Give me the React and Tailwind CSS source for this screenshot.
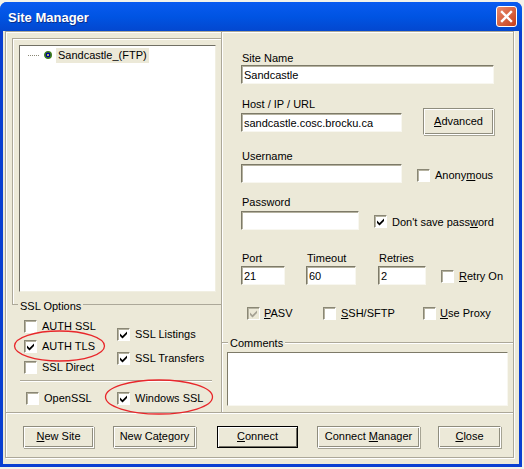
const checkPath = "M1 3.5 L3.5 6 L8 1.5 L8 4 L3.5 8.5 L1 6 Z";

function Check({ checked, disabled }) {
  return (
    <span className={`flex w-[13px] h-[13px] shrink-0 items-center justify-center border-t border-l border-t-[#8a8775] border-l-[#8a8775] border-r border-b border-r-white border-b-white shadow-[inset_1px_1px_0_#b5b2a0] ${disabled ? "bg-[#ece9d8]" : "bg-white"}`}>
      {checked && (
        <svg width="9" height="9" viewBox="0 0 9 9">
          <path d={checkPath} fill={disabled ? "#a5a294" : "#000"} />
        </svg>
      )}
    </span>
  );
}

function CheckRow({ className = "", checked, disabled, gap = "gap-[5px]", children }) {
  return (
    <div className={`flex items-center h-[14px] ${gap} ${className}`}>
      <Check checked={checked} disabled={disabled} />
      <span className="whitespace-nowrap leading-[14px]">{children}</span>
    </div>
  );
}

function Field({ className = "", value = "" }) {
  return (
    <div className={`h-[19px] bg-white border border-t-[#7d7a68] border-l-[#7d7a68] border-r-[#f8f7f0] border-b-[#f8f7f0] shadow-[inset_1px_1px_0_#b5b2a0] pl-[2px] leading-[18px] whitespace-nowrap overflow-hidden ${className}`}>
      {value}
    </div>
  );
}

function Label({ className = "", children }) {
  return <div className={`h-[14px] leading-[14px] pl-[1px] ${className}`}>{children}</div>;
}

function Btn({ className = "", def, children }) {
  return (
    <button className={`flex items-center justify-center pb-[1px] bg-[#ece9d8] whitespace-nowrap ${def ? "border border-black shadow-[inset_1px_1px_0_#fff,inset_-1px_-1px_0_#716f64]" : "border border-t-[#8f8d7e] border-l-[#8f8d7e] border-r-white border-b-white shadow-[1px_1px_0_#a6a494,inset_1px_1px_0_#fff,inset_-1px_-1px_0_#8f8d7e]"} ${className}`}>
      {children}
    </button>
  );
}

function Groove({ className = "" }) {
  return <div className={`h-[2px] border-t border-t-[#aca899] border-b border-b-white ${className}`} />;
}

export default function App() {
  return (
    <div className="relative w-[524px] h-[469px] overflow-hidden bg-[#f3f2ea] text-[11px] text-black font-['Liberation_Sans',sans-serif]">
      <div className="pt-[2px] pr-[2px]">
        <div className="w-[522px] rounded-t-[7px] bg-[#0a3fd1] px-[3px] pb-[3px] h-[465px] flex flex-col">
          <div className="h-[29px] -mx-[3px] rounded-t-[7px] bg-gradient-to-b from-[#0a5bf0] via-[#0054e3] to-[#0347cf] flex items-center justify-between pl-[8px] pr-[5px] shrink-0">
            <span className="text-white font-bold text-[13px] pt-[2px] [text-shadow:1px_1px_0_#0b2e8a]">Site Manager</span>
            <span className="w-[21px] h-[21px] rounded-[3px] border border-white bg-gradient-to-br from-[#e8896a] to-[#c63c14] flex items-center justify-center">
              <svg width="13" height="13" viewBox="0 0 13 13">
                <path d="M2 2 L11 11 M11 2 L2 11" stroke="#fff" strokeWidth="2.4" strokeLinecap="square" />
              </svg>
            </span>
          </div>

          <div className="flex-1 bg-[#ece9d8] pl-[2px] pr-[5px] pb-[6px] flex flex-col">
            <div className="flex-1 border border-[#aca899] shadow-[inset_1px_1px_0_#fff,1px_1px_0_#fff] flex flex-col">
              <div className="flex h-[381px] border-b border-b-[#aca899] shadow-[0_1px_0_#fff]">
                {/* left column */}
                <div className="w-[216px] shrink-0 border-r border-r-[#aca899] shadow-[1px_0_0_#fff] flex flex-col pl-[6px] pt-[6px]">
                  <div className="h-[267px] w-[210px] border border-[#aca899] shadow-[inset_1px_1px_0_#fff] pl-[6px] pt-[6px] pr-[6px] flex flex-col shrink-0">
                    <div className="h-[247px] w-[197px] bg-white border border-t-[#716f64] border-l-[#716f64] border-r-[#f1efe2] border-b-[#f1efe2] pl-[8px] pt-[1px]">
                      <div className="flex items-center h-[16px]">
                        <span className="w-[11px] border-t border-dotted border-t-[#8a8775]" />
                        <svg className="ml-[5px] mr-[4px]" width="8" height="8" viewBox="0 0 8 8">
                          <circle cx="4" cy="4" r="3.2" fill="#0000a0" stroke="#3f7f1e" strokeWidth="1.6" />
                          <circle cx="4" cy="4" r="1" fill="#e8ff40" />
                        </svg>
                        <span className="bg-[#ece9d8] px-[2px] h-[15px] leading-[15px] whitespace-nowrap">Sandcastle_(FTP)</span>
                      </div>
                    </div>
                  </div>
                  {/* SSL options */}
                  <div className="relative flex-1 mt-[-1px]">
                    <div className="absolute left-[6px] -top-[5px] bg-[#ece9d8] px-[2px] h-[14px] leading-[14px]">SSL Options</div>
                    <div className="flex pl-[12px] pt-[15px]">
                      <div className="flex flex-col w-[93px] gap-[6px]">
                        <CheckRow>AUTH SSL</CheckRow>
                        <CheckRow checked>AUTH TLS</CheckRow>
                        <CheckRow className="mt-[1px]">SSL Direct</CheckRow>
                      </div>
                      <div className="flex flex-col pt-[8px] gap-[10px]">
                        <CheckRow checked>SSL Listings</CheckRow>
                        <CheckRow checked>SSL Transfers</CheckRow>
                      </div>
                    </div>
                    <Groove className="ml-[8px] w-[192px] mt-[6px]" />
                    <div className="flex pl-[14px] pt-[9px]">
                      <CheckRow className="w-[91px]">OpenSSL</CheckRow>
                      <CheckRow checked>Windows SSL</CheckRow>
                    </div>
                  </div>
                </div>
                {/* right column */}
                <div className="flex-1 flex flex-col pl-[19px] pt-[19px] relative">
                  <Label>Site Name</Label>
                  <Field className="w-[253px]" value="Sandcastle" />
                  <div className="flex mt-[5px]">
                    <div className="w-[182px]">
                      <Label className="mt-[8px]">Host / IP / URL</Label>
                      <Field className="w-[161px] mt-[2px]" value="sandcastle.cosc.brocku.ca" />
                    </div>
                    <Btn className="w-[71px] h-[27px] mt-[19px]"><span><u>A</u>dvanced</span></Btn>
                  </div>
                  <Label className="mt-[14px]">Username</Label>
                  <div className="flex items-center mt-[1px]">
                    <Field className="w-[161px]" />
                    <CheckRow className="ml-[15px] mt-[3px]">Anony<u>m</u>ous</CheckRow>
                  </div>
                  <Label className="mt-[12px]">Password</Label>
                  <div className="flex items-center mt-[2px]">
                    <Field className="w-[118px]" />
                    <CheckRow className="ml-[15px] mt-[2px]" checked>Don't save pass<u>w</u>ord</CheckRow>
                  </div>
                  <div className="flex mt-[21px]">
                    <div className="w-[65px]"><Label>Port</Label><Field className="w-[44px] mt-[1px]" value="21" /></div>
                    <div className="w-[72px]"><Label>Timeout</Label><Field className="w-[50px] mt-[1px]" value="60" /></div>
                    <div className="w-[63px]"><Label>Retries</Label><Field className="w-[48px] mt-[1px]" value="2" /></div>
                    <CheckRow className="mt-[18px]"><u>R</u>etry On</CheckRow>
                  </div>
                  <div className="flex mt-[21px] pl-[6px]">
                    <CheckRow className="w-[76px]" disabled checked gap="gap-[4px]"><u>P</u>ASV</CheckRow>
                    <CheckRow className="w-[100px]"><u>S</u>SH/SFTP</CheckRow>
                    <CheckRow gap="gap-[4px]"><u>U</u>se Proxy</CheckRow>
                  </div>
                  <Groove className="-ml-[19px] mt-[22px]" />
                  <div className="absolute left-[6px] top-[304px] bg-[#ece9d8] px-[2px] h-[14px] leading-[14px]">Comments</div>
                  <div className="-ml-[14px] mt-[8px] w-[281px] h-[54px] bg-white border border-t-[#7d7a68] border-l-[#7d7a68] border-r-[#f8f7f0] border-b-[#f8f7f0]" />
                </div>
              </div>
              {/* buttons */}
              <div className="flex items-start pl-[17px] pt-[13px]">
                <Btn className="w-[71px] h-[22px]"><span><u>N</u>ew Site</span></Btn>
                <Btn className="w-[83px] h-[22px] ml-[19px]"><span>New Ca<u>t</u>egory</span></Btn>
                <Btn def className="w-[81px] h-[22px] ml-[21px]"><span><u>C</u>onnect</span></Btn>
                <Btn className="w-[103px] h-[22px] ml-[19px]"><span>Connect <u>M</u>anager</span></Btn>
                <Btn className="w-[63px] h-[22px] ml-[18px]"><span><u>C</u>lose</span></Btn>
              </div>
            </div>
          </div>
        </div>
      </div>
      {/* hand-drawn red marks over the dialog */}
      <svg className="absolute left-0 top-0 pointer-events-none" width="524" height="469">
        <ellipse cx="59.5" cy="346" rx="45" ry="15" fill="none" stroke="#e8262a" strokeWidth="1.3" />
        <ellipse cx="159" cy="397" rx="53.5" ry="17" fill="none" stroke="#e8262a" strokeWidth="1.3" />
      </svg>
    </div>
  );
}
